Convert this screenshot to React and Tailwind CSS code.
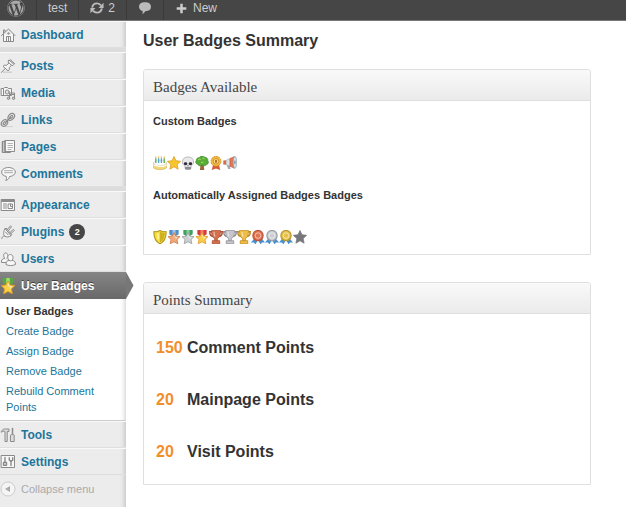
import { FaWordpress } from 'react-icons/fa';

const line = { fill: 'none', stroke: '#8a8a8a', strokeWidth: 1, strokeLinecap: 'round', strokeLinejoin: 'round' };

function Icon({ children, size = 16, viewBox = '0 0 16 16' }) {
  return (
    <svg width={size} height={size} viewBox={viewBox} className="block shrink-0" aria-hidden="true">
      {children}
    </svg>
  );
}

function BadgeIcon({ children, size = 14 }) {
  return <Icon size={size} viewBox="0.5 0.5 15 15">{children}</Icon>;
}

const menuIcons = {
  dashboard: (
    <Icon>
      <g {...line}>
        <path d="M3.500 7.500v7h10v-7" fill="#f6f6f6" />
        <path d="M1.500 8.500 8.500 2l6.500 6.500M3.500 6V3H5v1.500" />
        <path d="M6.500 14.500V9.500h4v5M8.500 9.500v5" />
        <circle cx="8.500" cy="6.500" r=".8" />
      </g>
    </Icon>
  ),
  posts: (
    <Icon>
      <path d="M3 14.200h9" stroke="#cfcfcf" strokeWidth="1.400" />
      <g {...line}>
        <path d="m9.200 2.200 4.800 4.200-1.100 1.100-1.400-.3-2.200 2.400.1 2L8 12.800 3 8.300l1.400-1.100 2.200.1L8.800 5l-.6-1.600z" fill="#f4f4f4" />
        <path d="m5.400 10.400-3.900 4M8.800 5l2.700 2.200M10.200 1.600l4.400 4" />
      </g>
    </Icon>
  ),
  media: (
    <Icon>
      <g {...line}>
        <path d="M1.500 3.500h2.200l.8-1h3l.8 1h3.200v7h-10z" fill="#f6f6f6" />
        <path d="M3.500 4v6" />
        <circle cx="7.200" cy="7" r="2" fill="#e4e4e4" />
        <path d="M9.500 13V8h5v5M9.500 9.500h5" />
        <circle cx="8.500" cy="13.300" r="1.200" fill="#ccc" />
        <circle cx="13.500" cy="13.300" r="1.200" fill="#ccc" />
      </g>
    </Icon>
  ),
  links: (
    <Icon>
      <path d="M5 14.600h8" stroke="#d2d2d2" />
      <g {...line} strokeWidth="1.200">
        <path d="M9 3.200c1.600-2 3.600-2.300 4.900-1.200 1.300 1.200.9 3-.4 4.400-1.200 1.500-2.600 2.400-4.400 1.700L8 7.200c-.4-1.500.1-2.800 1-4z" fill="#f0f0f0" />
        <path d="M10.400 4.400c.8-1 1.600-1.200 2.100-.8s.3 1.200-.5 2-1.400 1-1.900.6-.3-1.100.3-1.800z" />
        <path d="M2.300 9.400c1.500-1.700 3.200-2.100 4.600-1 1.300 1.200 1 2.900-.3 4.400-1.300 1.400-3.200 2-4.600.8s-1-2.700.3-4.200z" fill="#f0f0f0" />
        <path d="M3.700 10.600c.7-.9 1.500-1 2-.6s.3 1.100-.5 1.900-1.400.9-1.900.5-.2-1.100.4-1.800zM5.600 10.500l4.900-5.200" />
      </g>
    </Icon>
  ),
  pages: (
    <Icon>
      <g {...line}>
        <path d="M4.500 2.500h-2v11h8v-.500" fill="#ddd" />
        <path d="M5.500 1.500h9v11h-9z" fill="#f8f8f8" />
        <path d="M5 2v11M2.500 3v10" strokeWidth="1.500" />
        <path d="M8 4.500h4.500M8 6.500h4.500M8 8.500h4.500M8 10.500h3" stroke="#b4b4b4" />
      </g>
    </Icon>
  ),
  comments: (
    <Icon>
      <g {...line}>
        <path d="M8.500 1.500c3.900 0 6.800 1.900 6.800 4.500s-2.600 4.300-5.700 4.500c-.4 1.800-1.600 3.200-3.800 4 .7-1.300.9-2.700.5-4.100C3.500 10 1.700 8.400 1.700 6c0-2.600 2.900-4.500 6.800-4.500z" fill="#f8f8f8" />
        <path d="M4.500 4.700h8M4.500 6.700h8" stroke="#aaa" />
      </g>
    </Icon>
  ),
  appearance: (
    <Icon>
      <g {...line}>
        <path d="M1.500 2.500h13v11h-13z" fill="#f8f8f8" />
        <path d="M2 4h12" strokeWidth="1.800" />
        <path d="M3.500 7h3M3.500 9h3M3.500 11h3M8.500 7h4v4.500h-4zM10.500 7v2.500h2" />
      </g>
    </Icon>
  ),
  plugins: (
    <Icon>
      <g {...line}>
        <path d="M5.200 4.800 11 11.600c-2 1.700-4.700 1.900-6.300.5C3.100 10.600 3.200 7 5.200 4.800z" fill="#f3f3f3" />
        <path d="M4.600 5.300 6 4l5.800 6.500-1.400 1.400M7.200 5.500l3.300-3.700 1 .9-3.100 4M10 8.600l3.300-3.300 1 1-3.300 3.300M4.500 12c-1.700.2-2.500 1-2.700 2.500M5.500 8l2.600 2.800" />
      </g>
    </Icon>
  ),
  users: (
    <Icon>
      <g {...line}>
        <path d="M4.700 7.200C3.200 6.200 3 2 5.700 2s2.500 4.200 1.300 5.200" fill="#f6f6f6" />
        <path d="M7 11.500H1.500c-.4-2.300.8-3.700 3-4.200" fill="#f6f6f6" />
        <path d="M8.900 9.300C6.600 6.500 8 3.500 10.400 3.500s3.600 3.200 1.700 5.800c2.300.4 3.500 1.700 3.400 4.200-2.500 1.400-7.200 1.400-9.500 0 0-2.500.8-3.700 2.900-4.200z" fill="#f8f8f8" />
        <path d="M8.900 9.300c1 .8 2.200.8 3.200 0" />
      </g>
    </Icon>
  ),
  tools: (
    <Icon>
      <g {...line}>
        <path d="M1.500 4.200C2.600 2.300 4 1.800 5.500 2H9v2.500H7.200v10H5v-10C3.900 3.900 2.600 4 1.500 5z" fill="#ddd" />
        <path d="M12.500 1.500v6" strokeWidth="1.500" />
        <path d="M10.800 8c.9-.7 2.500-.7 3.400 0v6.500h-3.400z" fill="#ddd" />
      </g>
    </Icon>
  ),
  settings: (
    <Icon>
      <g {...line}>
        <path d="M1.500 1.500h13v12h-13z" fill="#f8f8f8" />
        <path d="M5 3.500v4.500M3.500 8.500h3v2.700h-3zM11 7v4.500" strokeWidth="1.400" />
        <path d="M9.300 3.800v2.400l1.700 1 1.700-1V3.800" strokeWidth="1.400" />
      </g>
    </Icon>
  ),
};

const starPath = 'm8 1 2.100 4.600 5 .6-3.700 3.400 1 5L8 12.100l-4.400 2.500 1-5L.9 6.200l5-.6z';

function Star({ fill = '#f7c52d', stroke = '#d99a1d' }) {
  return (
    <BadgeIcon>
      <path d={starPath} fill={fill} stroke={stroke} strokeWidth=".8" strokeLinejoin="round" />
    </BadgeIcon>
  );
}

function MedalStar({ ribbon, light, fill, stroke, size = 14 }) {
  return (
    <BadgeIcon size={size}>
      <path d="M3 0h10v5l-3 2H6L3 5z" fill={ribbon} />
      <path d="M6.300 0h3.400v5.500H6.300z" fill={light} />
      <path d="m8 3.200 1.900 3.900 4.500.5-3.200 3.100.9 4.600L8 13.100l-4.100 2.200.9-4.600-3.200-3.100 4.500-.5z" fill={fill} stroke={stroke} strokeWidth=".9" strokeLinejoin="round" />
      <path d="m8 5.600 1 2.600 2.500.4-1.900 1.600" fill="none" stroke="#fff" strokeOpacity=".55" />
    </BadgeIcon>
  );
}

function Trophy({ fill, stroke }) {
  return (
    <BadgeIcon>
      <path d="M4 2.500H1.300c0 3.200 1.200 4.800 3.700 5M12 2.500h2.700c0 3.200-1.200 4.800-3.700 5" fill="none" stroke={stroke} strokeWidth="1.600" />
      <path d="M3.200 1h9.600c0 4.700-.8 7.700-3.300 8.500V12h-3V9.500C4 8.700 3.200 5.700 3.200 1z" fill={fill} stroke={stroke} strokeWidth=".8" />
      <path d="M4 12h8v3.300H4z" fill={fill} stroke={stroke} strokeWidth=".9" />
      <path d="M5.800 2.500c0 2.500.3 4 1.200 5" fill="none" stroke="#fff" strokeOpacity=".6" strokeWidth="1.200" />
    </BadgeIcon>
  );
}

function Rosette({ fill, stroke }) {
  return (
    <BadgeIcon>
      <path d="m4.500 9-4 5 3.200-.2L5.200 16l2.600-4.500zM11.500 9l4 5-3.200-.2-1.500 2.200-2.600-4.500z" fill="#4790cf" />
      <circle cx="8" cy="6.500" r="5.500" fill={fill} stroke={stroke} strokeWidth="1.200" />
      <circle cx="8" cy="6.500" r="3" fill={fill} stroke="#fff" strokeOpacity=".6" />
    </BadgeIcon>
  );
}

const customBadges = [
  <BadgeIcon>
    <path d="M1 8h14v5c-1.500 2.700-12.500 2.700-14 0z" fill="#f3d675" stroke="#d0a74b" strokeWidth=".6" />
    <ellipse cx="8" cy="8" rx="7" ry="2.700" fill="#fff" stroke="#b9cbd2" strokeWidth=".6" />
    <path d="M1 10c2 1.500 4 0 5 1.500 2 .7 3-.7 4.500 0 1.500.5 3-.5 4.500-1.500" fill="none" stroke="#fff" strokeWidth="1.300" />
    <path d="M3.500 3v5M12.500 3v5" stroke="#6bb34b" strokeWidth="1.500" />
    <path d="M6.500 3v5M9.500 3v5" stroke="#58a7db" strokeWidth="1.500" />
    <path d="M3.500 1v1.500M6.500 1v1.500M9.500 1v1.500M12.500 1v1.500" stroke="#f0ab35" strokeWidth="1.300" />
  </BadgeIcon>,
  <Star />,
  <BadgeIcon>
    <path d="M8 1.500c3.800 0 6 2.200 6 5.200 0 2.300-1.100 3.700-2.800 4.500v3c-1.300 1.200-5.100 1.200-6.400 0v-3C3.100 10.400 2 9 2 6.700c0-3 2.200-5.200 6-5.200z" fill="#e9e9ec" stroke="#a9a9ad" strokeWidth=".8" />
    <path d="M4.800 12.300h6.400v2c-1.300 1-5.100 1-6.400 0z" fill="#8c8c92" />
    <ellipse cx="5.400" cy="8.700" rx="1.900" ry="1.600" fill="#2d2936" />
    <ellipse cx="10.600" cy="8.700" rx="1.900" ry="1.600" fill="#2d2936" />
    <path d="m8 10-.8 1.600h1.600z" fill="#444" />
  </BadgeIcon>,
  <BadgeIcon>
    <path d="M6.500 9h3.200l.8 6.500H5.700z" fill="#9c6738" />
    <path d="M5 2.300C6 .5 9.500.3 11 1.800c2.200.2 3.500 1.700 3.200 3.500 1.200 1.500.7 3.800-1.200 4.400-1 1.500-3.500 1.600-4.700.5-1.700 1.300-4.300.9-4.900-.9C1.200 8.800.7 6.500 1.900 5.300 1.700 3.600 3.200 2.100 5 2.300z" fill="#58ad37" stroke="#3b8228" strokeWidth=".7" />
    <path d="M4 4.500c1-.8 2-.7 2.700 0M8.300 3.200c1-.5 2 0 2.400.8M7 7.200c1 .6 2 .4 2.700-.3" fill="none" stroke="#92d65e" strokeWidth="1.200" />
  </BadgeIcon>,
  <BadgeIcon>
    <path d="m5 9-1.500 6.500L8 13.800l4.500 1.700L11 9z" fill="#d55a36" />
    <circle cx="8" cy="6.200" r="5.300" fill="#f6bd40" stroke="#d38c20" strokeWidth="1" strokeDasharray="2 .7" />
    <circle cx="8" cy="6.200" r="3" fill="#f9d981" stroke="#bd7f24" strokeWidth=".8" />
    <path d="M7 4.700h2v3H7z" fill="#b46c24" />
  </BadgeIcon>,
  <BadgeIcon>
    <path d="M4 8.500h3.500l1 6H6z" fill="#a3a8ad" />
    <path d="M.8 5.300 4 5v5l-3.200-.500z" fill="#d86a45" />
    <path d="m4 5 4-1.800v8.300L4 10z" fill="#dfe3e6" stroke="#9da4aa" strokeWidth=".6" />
    <path d="m8 3.200 4.800-2.200v12.700L8 11.500z" fill="#e57751" stroke="#bd573c" strokeWidth=".6" />
    <ellipse cx="13.300" cy="7.300" rx="1.900" ry="6.200" fill="#d5e3ec" stroke="#8199a8" strokeWidth=".7" />
    <ellipse cx="13.300" cy="7.300" rx=".7" ry="2.300" fill="#788b98" />
  </BadgeIcon>,
];

const autoBadges = [
  <BadgeIcon>
    <path d="M8 1c2 1.200 4.300 1.500 6.500 1.300.3 6-1.500 10.500-6.500 13C3 12.800 1.200 8.300 1.500 2.300 3.700 2.500 6 2.200 8 1z" fill="#f5dc43" stroke="#b29a22" strokeWidth="1.200" />
    <path d="M8 2.500v11.500c3.500-2 5.200-5.500 5.300-10.500C11.300 3.600 9.500 3.200 8 2.500z" fill="#d2b11f" />
    <path d="M5.800 4v6.500" stroke="#fff8b0" strokeWidth="1.500" />
  </BadgeIcon>,
  <MedalStar ribbon="#4f8ec9" light="#9cc7ec" fill="#efaa78" stroke="#cd7d4c" />,
  <MedalStar ribbon="#3f9f66" light="#89cf91" fill="#cdd0d1" stroke="#9b9fa1" />,
  <MedalStar ribbon="#d73c3c" light="#f27a68" fill="#f9cd48" stroke="#dc9b2a" />,
  <Trophy fill="#d4714c" stroke="#ad5138" />,
  <Trophy fill="#c6c6cc" stroke="#929299" />,
  <Trophy fill="#efbe45" stroke="#c28b22" />,
  <Rosette fill="#e17350" stroke="#bf4f35" />,
  <Rosette fill="#cbced2" stroke="#979ca3" />,
  <Rosette fill="#e5c245" stroke="#b9932b" />,
  <Star fill="#77777b" stroke="#77777b" />,
];

const menuGroups = [
  [{ id: 'dashboard', label: 'Dashboard' }],
  [
    { id: 'posts', label: 'Posts' },
    { id: 'media', label: 'Media' },
    { id: 'links', label: 'Links' },
    { id: 'pages', label: 'Pages' },
    { id: 'comments', label: 'Comments' },
  ],
  [
    { id: 'appearance', label: 'Appearance' },
    { id: 'plugins', label: 'Plugins', count: 2 },
    { id: 'users', label: 'Users' },
  ],
];

const submenu = ['User Badges', 'Create Badge', 'Assign Badge', 'Remove Badge', 'Rebuild Comment Points'];

const points = [
  { value: 150, label: 'Comment Points' },
  { value: 20, label: 'Mainpage Points' },
  { value: 20, label: 'Visit Points' },
];

function MenuItem({ item }) {
  return (
    <li>
      <a href="#" className="flex h-[27px] items-center gap-[5px] border-t border-t-[#f9f9f9] border-b border-b-[#dfdfdf] text-xs font-bold text-[#21759b]">
        {menuIcons[item.id]}
        <span>{item.label}</span>
        {item.count && (
          <span className="flex size-4 items-center justify-center rounded-full bg-[#464646] text-[9px] text-white">{item.count}</span>
        )}
      </a>
    </li>
  );
}

function AdminBar() {
  const item = 'flex items-center border-r border-[#3a3a3a] pb-1';
  return (
    <header className="flex h-[21px] border-b border-[#777] bg-[#464646] text-xs text-[#ccc]">
      <a href="#" className={`${item} w-[37px] pl-[7px]`} aria-label="WordPress">
        <FaWordpress size={18} color="#aaa" />
      </a>
      <a href="#" className={`${item} px-[11px]`}>test</a>
      <a href="#" className={`${item} gap-1 px-[11px]`}>
        <Icon size={14}>
          <g fill="none" stroke="#bbb" strokeWidth="2.200">
            <path d="M2.500 7.500C3 4.500 5.300 2.700 8 2.700c2 0 3.600.9 4.600 2.400M13.500 8.500c-.5 3-2.800 4.800-5.500 4.800-2 0-3.600-.9-4.600-2.400" />
          </g>
          <path d="M15.500 2v6H9.700zM.5 14V8h5.800z" fill="#bbb" />
        </Icon>
        2
      </a>
      <a href="#" className={`${item} px-[11px]`} aria-label="Comments">
        <Icon size={14}>
          <path d="M8 1.500c4 0 6.800 1.500 6.800 5s-2.500 5-6 5L5.300 15v-3.700C2.800 10.700 1.200 9.200 1.200 6.500c0-3.500 2.800-5 6.800-5z" fill="#bbb" />
        </Icon>
      </a>
      <a href="#" className="flex items-center gap-[6px] px-3 pb-1">
        <Icon size={11}>
          <path d="M8 1v14M1 8h14" stroke="#ccc" strokeWidth="3.600" />
        </Icon>
        New
      </a>
    </header>
  );
}

function Sidebar() {
  return (
    <nav className="w-[126px] shrink-0 bg-[#ececec] shadow-[inset_-5px_0_5px_-4px_#bbb]">
      {menuGroups.map((group, i) => (
        <ul key={i} className={i === 2 ? '' : 'border-b-4 border-[#dcdcdc]'}>
          {group.map((item) => (
            <MenuItem key={item.id} item={item} />
          ))}
        </ul>
      ))}
      <div className="relative">
        <a href="#" className="flex h-[27px] items-center gap-[5px] bg-linear-to-b from-[#858585] to-[#696969] text-xs font-bold text-white text-shadow-[0_-1px_0_#444]">
          <MedalStar ribbon="#56a93f" light="#9edb72" fill="#fbd146" stroke="#dd9f2a" size={16} />
          User Badges
        </a>
        <svg className="absolute top-0 left-full" width="8" height="27" viewBox="0 0 8 27" aria-hidden="true">
          <path d="M0 0 7.500 13.500 0 27z" fill="#777" />
        </svg>
      </div>
      <ul className="border-b border-[#ccc] bg-white pt-[2px] pb-[3px] pl-[6px] text-[11px] leading-4 text-[#21759b] shadow-[inset_-5px_0_5px_-4px_#ccc]">
        {submenu.map((label, i) => (
          <li key={label} className="py-[2px] pr-5">
            <a href="#" className={i === 0 ? 'font-bold text-[#333]' : ''}>{label}</a>
          </li>
        ))}
      </ul>
      <ul>
        <MenuItem item={{ id: 'tools', label: 'Tools' }} />
        <MenuItem item={{ id: 'settings', label: 'Settings' }} />
      </ul>
      <button type="button" className="flex h-7 items-center gap-[5px] text-[11px] text-[#aaa]">
        <Icon>
          <circle cx="8" cy="8" r="7" fill="#f5f5f5" stroke="#ccc" />
          <path d="M10 5v6L5 8z" fill="#aaa" />
        </Icon>
        Collapse menu
      </button>
    </nav>
  );
}

function Panel({ title, children }) {
  return (
    <section className="mb-[27px] rounded-t-[3px] border border-[#dfdfdf] bg-white">
      <h2 className="flex h-[31px] items-center rounded-t-[3px] border-b border-[#dfdfdf] bg-linear-to-b from-[#f9f9f9] to-[#ebebeb] px-[9px] pt-1 font-['Droid_Serif','Liberation_Serif',serif] text-[15px] text-[#464646]">
        {title}
      </h2>
      {children}
    </section>
  );
}

function BadgeRow({ badges }) {
  return (
    <div className="flex">
      {badges.map((badge, i) => (
        <span key={i} className="py-px">{badge}</span>
      ))}
    </div>
  );
}

export default function App() {
  return (
    <div className="flex min-h-screen flex-col bg-white font-['Liberation_Sans',Arial,sans-serif] text-[#333]">
      <AdminBar />
      <div className="flex grow">
        <Sidebar />
        <main className="min-w-0 grow pt-2 pr-[35px] pl-[17px]">
          <h1 className="mb-4 text-base leading-6 font-bold">User Badges Summary</h1>
          <Panel title="Badges Available">
            <div className="px-[9px] pt-3 pb-[9px] text-[11px] leading-4 font-bold">
              <h3 className="mb-[26px]">Custom Badges</h3>
              <BadgeRow badges={customBadges} />
              <h3 className="mt-4 mb-[26px]">Automatically Assigned Badges Badges</h3>
              <BadgeRow badges={autoBadges} />
            </div>
          </Panel>
          <Panel title="Points Summary">
            <table className="mt-2 mb-[6px] ml-3 text-base font-bold">
              <tbody>
                {points.map((row) => (
                  <tr key={row.label} className="h-[52px]">
                    <td className="w-[31px] text-[#f18e2c]">{row.value}</td>
                    <td>{row.label}</td>
                  </tr>
                ))}
              </tbody>
            </table>
          </Panel>
        </main>
      </div>
    </div>
  );
}
